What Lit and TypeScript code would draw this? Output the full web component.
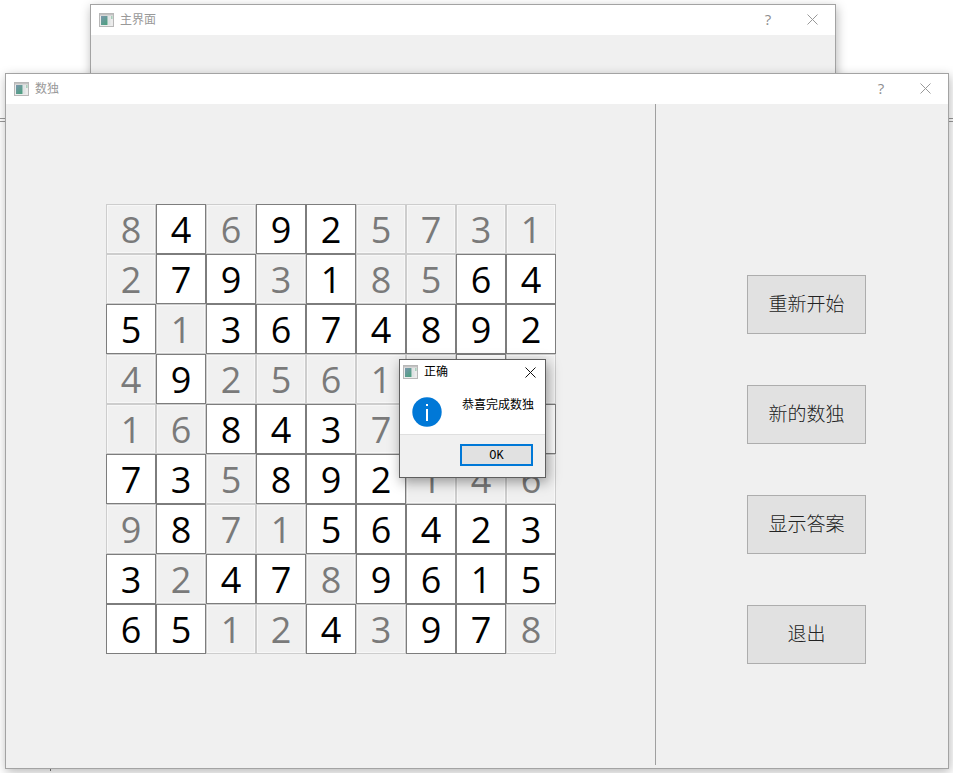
import { LitElement, html, css, svg } from "lit";
import { customElement, property } from "lit/decorators.js";

const appIcon = svg`<svg class="glyph" width="15" height="14" viewBox="0 0 15 14" aria-hidden="true">
  <defs><linearGradient id="ag" x1="0" y1="0" x2="0.7" y2="1"><stop offset="0" stop-color="#7c97ad"/><stop offset="1" stop-color="#4f9f82"/></linearGradient></defs>
  <rect x="0.5" y="0.5" width="14" height="13" fill="#ececec" stroke="#b8b8b8"/>
  <rect x="1" y="1" width="13" height="1.5" fill="#c2c2c2"/>
  <rect x="2" y="3" width="6.5" height="9" fill="url(#ag)"/>
  <rect x="9" y="3" width="2.5" height="9" fill="#dfe3e4"/>
  <rect x="12" y="3" width="1.6" height="3" fill="#a9cfbb"/>
</svg>`;

const closeIcon = svg`<svg class="glyph" width="11" height="11" viewBox="0 0 11 11" aria-hidden="true"><path d="M0.5 0.5 L10.5 10.5 M10.5 0.5 L0.5 10.5" stroke="currentColor" stroke-width="1" fill="none"/></svg>`;

const infoIcon = svg`<svg class="glyph" width="30" height="30" viewBox="0 0 30 30" aria-hidden="true">
  <circle cx="15" cy="15" r="14.7" fill="#0078d7"/>
  <rect x="14" y="12" width="2" height="12" fill="#fff"/>
  <rect x="14" y="7" width="2" height="2" fill="#fff"/>
</svg>`;

@customElement("title-bar")
class TitleBar extends LitElement {
  @property() label = "";
  static styles = css`
    :host { display: flex; align-items: center; height: 30px; background: #fff; color: #999; padding-left: 8px; box-sizing: border-box; flex: none; }
    .glyph { display: block; flex: none; }
    .label { margin-left: 6px; font: 12px/16px "Noto Sans CJK SC", sans-serif; flex: 1; padding-bottom: 2px; }
    .help { width: 12px; text-align: center; font: 15px/18px "Open Sans", sans-serif; color: #8e8e8e; margin-right: 33px; padding-bottom: 2px; }
    .close { display: flex; margin-right: 17px; padding-bottom: 1px; }
  `;
  render() {
    return html`${appIcon}<span class="label">${this.label}</span><span class="help">?</span><span class="close">${closeIcon}</span>`;
  }
}

/* "_" marks a cell whose digit lies completely under the message box. */
const BOARD = [
  "8g 4 6g 9 2 5g 7g 3g 1g",
  "2g 7 9 3g 1 8g 5g 6 4",
  "5 1g 3 6 7 4 8 9 2",
  "4g 9 2g 5g 6g 1g _g _ _g",
  "1g 6g 8 4 3 7g _g _g _",
  "7 3 5g 8 9 2 1g 4g 6g",
  "9g 8 7g 1g 5 6 4 2 3",
  "3 2g 4 7 8g 9 6 1 5",
  "6 5 1g 2g 4 3g 9 7 8g",
].flatMap((r) => r.split(" "));

@customElement("app-root")
class AppRoot extends LitElement {
  static styles = css`
    :host { display: block; position: relative; width: 953px; height: 773px; overflow: hidden; background: #fff; }
    .glyph { display: block; flex: none; }
    .backlines { position: absolute; left: 0; top: 118px; width: 100%; height: 4px; box-sizing: border-box; border-top: 1px solid #9a9a9a; border-bottom: 1px solid #9a9a9a; }
    .tick { position: absolute; left: 50px; top: 768px; width: 1px; height: 3px; background: #777; }
    .win { position: absolute; box-sizing: border-box; border: 1px solid #a3a3a3; background: #f0f0f0; display: flex; flex-direction: column; box-shadow: 1px 3px 10px rgba(0,0,0,.28); }
    .main { left: 90px; top: 4px; width: 746px; height: 200px; }
    .sudoku { left: 5px; top: 73px; width: 944px; height: 696px; }
    .body { display: flex; flex: 1; min-height: 0; }
    .left { width: 649px; flex: none; padding: 100px 0 0 100px; box-sizing: border-box; }
    .sep { width: 1px; height: 661px; background: #a0a0a0; flex: none; }
    .right { flex: 1; display: flex; flex-direction: column; gap: 51px; padding: 171px 0 0 91px; box-sizing: border-box; }
    .btn { box-sizing: border-box; width: 119px; height: 59px; padding-bottom: 3px; background: #e1e1e1; border: 1px solid #adadad; display: flex; align-items: center; justify-content: center; font: 300 19px/24px "Noto Sans CJK SC", serif; color: #222; }
    .board { display: grid; grid-template-columns: repeat(9, 50px); grid-auto-rows: 50px; }
    .cell { box-sizing: border-box; padding-top: 2px; display: flex; align-items: center; justify-content: center; border: 1px solid #7d7d7d; background: #fff; color: #000; font: 36px/46px "Open Sans", sans-serif; }
    .cell.given { border-color: #cdcdcd; background: #f0f0f0; color: #7a7a7a; box-shadow: inset 0 0 0 1px #f7f7f7; }
    .dialog { position: absolute; left: 399px; top: 359px; width: 147px; height: 119px; box-sizing: border-box; border: 1px solid #5f5f5f; background: #fff; display: flex; flex-direction: column; box-shadow: 2px 4px 12px rgba(0,0,0,.38); }
    .dlg-title { display: flex; align-items: center; height: 24px; padding: 0 9px 0 3px; flex: none; color: #000; }
    .dlg-title span { margin-left: 6px; font: 12px/16px "Noto Sans CJK SC", sans-serif; flex: 1; padding-bottom: 2px; }
    .dlg-close { display: flex; color: #111; }
    .dlg-msg { display: flex; flex: 1; padding: 13px 0 0 12px; align-items: flex-start; }
    .dlg-msg span { margin: -1px 0 0 20px; font: 12px/16px "Noto Sans CJK SC", sans-serif; color: #000; }
    .dlg-foot { flex: none; height: 43px; box-sizing: border-box; border-top: 1px solid #dfdfdf; background: #f0f0f0; display: flex; justify-content: flex-end; padding: 9px 12px 0 0; }
    .ok { box-sizing: border-box; width: 73px; height: 22px; padding-top: 2px; border: 2px solid #0078d7; background: #e1e1e1; display: flex; align-items: center; justify-content: center; font: 12px/14px "Liberation Mono", monospace; color: #000; }
  `;
  render() {
    return html`
      <div class="backlines"></div>
      <div class="tick"></div>
      <section class="win main"><title-bar label="主界面"></title-bar></section>
      <section class="win sudoku">
        <title-bar label="数独"></title-bar>
        <div class="body">
          <div class="left">
            <div class="board">
              ${BOARD.map((c) => html`<div class="cell ${c.length > 1 ? "given" : ""}">${c[0] === "_" ? "" : c[0]}</div>`)}
            </div>
          </div>
          <div class="sep"></div>
          <div class="right">
            ${["重新开始", "新的数独", "显示答案", "退出"].map((t) => html`<div class="btn">${t}</div>`)}
          </div>
        </div>
      </section>
      <section class="dialog">
        <div class="dlg-title">${appIcon}<span>正确</span><div class="dlg-close">${closeIcon}</div></div>
        <div class="dlg-msg">${infoIcon}<span>恭喜完成数独</span></div>
        <div class="dlg-foot"><div class="ok">OK</div></div>
      </section>
    `;
  }
}
